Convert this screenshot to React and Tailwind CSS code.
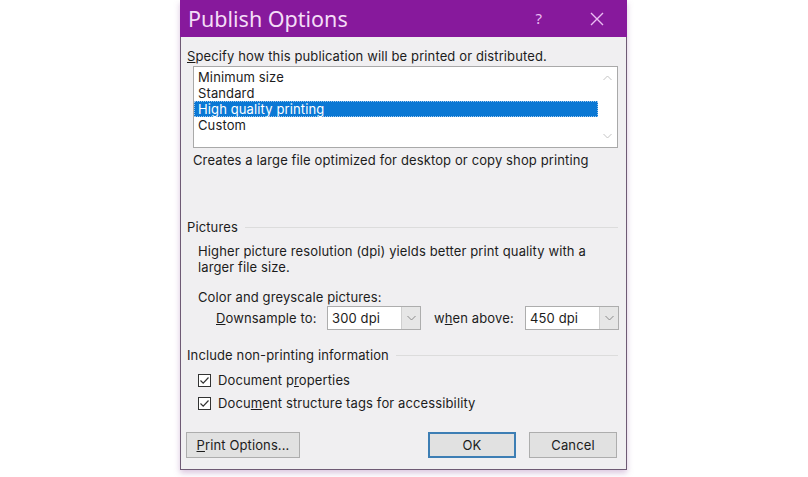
import React from "react";

const font = { fontFamily: '"Noto Sans", "Open Sans", sans-serif' };
const bodyFont = { fontFamily: 'Inter, "Noto Sans", sans-serif' };

const Chevron = ({ up, className }) => (
  <svg width="9" height="6" viewBox="0 0 9 6" className={className}>
    <path
      d={up ? "M0.5 5 L4.5 1 L8.5 5" : "M0.5 1 L4.5 5 L8.5 1"}
      fill="none"
      stroke="currentColor"
      strokeWidth="1"
    />
  </svg>
);

const Check = () => (
  <div className="w-[13px] h-[13px] border border-[#333] bg-white flex items-center justify-center">
    <svg width="11" height="11" viewBox="0 0 11 11">
      <path d="M1.5 5.5 L4.2 8.2 L9.5 2.5" fill="none" stroke="#333" strokeWidth="1.2" />
    </svg>
  </div>
);

const Select = ({ value }) => (
  <div className="w-[94px] h-[24px] border border-[#adadad] bg-white flex">
    <div className="flex-1 pl-[4px] flex items-center">{value}</div>
    <div className="w-[19px] bg-[#e6e6e6] border-l border-[#cfcfcf] flex items-center justify-center text-[#8a8a8a]">
      <Chevron />
    </div>
  </div>
);

const Section = ({ title }) => (
  <div className="flex items-center h-[16px]">
    <span>{title}</span>
    <div className="flex-1 ml-[7px] mr-[2px] h-px bg-[#dcdcdc]" />
  </div>
);

export default function App() {
  const items = ["Minimum size", "Standard", "High quality printing", "Custom"];

  return (
    <div className="w-[808px] h-[477px] bg-white" style={font}>
      <div className="ml-[180px] w-[447px] h-[470px] bg-[#f0eff1] border-x border-b border-[#6e5a74] shadow-[0_3px_6px_rgba(150,90,160,0.35)] text-[#1c1c1c]">
        {/* Title bar */}
        <div className="h-[37px] bg-[#87199c] flex items-center pl-[8px] -mx-px">
          <span className="text-[21.5px] text-[#f4ddf7] leading-none">Publish Options</span>
          <span className="ml-auto mr-[48px] text-[15px] text-[#ebbdf3]">?</span>
          <svg width="14" height="14" viewBox="0 0 14 14" className="mr-[23px]">
            <path d="M1 1 L13 13 M13 1 L1 13" stroke="#ebbdf3" strokeWidth="1.4" />
          </svg>
        </div>

        <div className="px-[6px] text-[13px] tracking-[0.12px] leading-[16px]" style={bodyFont}>
          <div className="mt-[11px]">
            <span className="underline">S</span>pecify how this publication will be printed or distributed.
          </div>

          {/* List box */}
          <div className="ml-[6px] mt-[2px] w-[425px] h-[82px] border border-[#a9a9a9] bg-white flex">
            <div className="flex-1 pt-[2px]">
              {items.map((it) => (
                <div
                  key={it}
                  className={
                    it === "High quality printing"
                      ? "h-[16px] pl-[3px] bg-[#0b78d4] text-white border border-dotted border-[#9cc8ee] leading-[14px]"
                      : "h-[16px] pl-[4px]"
                  }
                >
                  {it}
                </div>
              ))}
            </div>
            <div className="w-[19px] flex flex-col justify-between items-center py-[8px] text-[#c4c4c4]">
              <Chevron up />
              <Chevron />
            </div>
          </div>

          <div className="ml-[6px] mt-[4px]">
            Creates a large file optimized for desktop or copy shop printing
          </div>

          <div className="mt-[51px]">
            <Section title="Pictures" />
          </div>

          <div className="pl-[11px] mt-[8px]">
            <div>Higher picture resolution (dpi) yields better print quality with a</div>
            <div>larger file size.</div>
            <div className="mt-[14px]">Color and greyscale pictures:</div>
            <div className="mt-[1px] flex items-center">
              <span className="ml-[18px] w-[111px]">
                <span className="underline">D</span>ownsample to:
              </span>
              <Select value="300 dpi" />
              <span className="ml-[13px] w-[91px]">
                w<span className="underline">h</span>en above:
              </span>
              <Select value="450 dpi" />
            </div>
          </div>

          <div className="mt-[17px]">
            <Section title="Include non-printing information" />
          </div>

          <div className="pl-[11px] mt-[9px]">
            <div className="flex items-center h-[16px] gap-[7px]">
              <Check />
              <span>
                Document p<span className="underline">r</span>operties
              </span>
            </div>
            <div className="flex items-center h-[16px] gap-[7px] mt-[7px]">
              <Check />
              <span>
                Docu<span className="underline">m</span>ent structure tags for accessibility
              </span>
            </div>
          </div>

          <div className="mt-[21px] flex items-center -ml-px">
            <button className="w-[114px] h-[26px] border border-[#adadad] bg-[#e1e1e1]">
              <span className="underline">P</span>rint Options...
            </button>
            <button className="ml-auto w-[88px] h-[26px] border-2 border-[#3d7eb4] bg-[#e1e1e1]">
              OK
            </button>
            <button className="ml-[13px] mr-[3px] w-[88px] h-[26px] border border-[#adadad] bg-[#e1e1e1]">
              Cancel
            </button>
          </div>
        </div>
      </div>
    </div>
  );
}
